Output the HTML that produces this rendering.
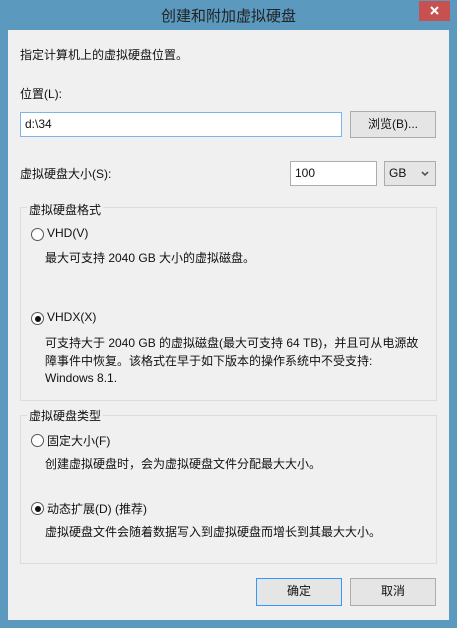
<!DOCTYPE html><html><head><meta charset="utf-8"><style>
*{margin:0;padding:0;box-sizing:border-box}
body{width:457px;height:628px;background:#5b99bf;position:relative;overflow:hidden;font-family:"Liberation Sans","Noto Sans CJK SC",sans-serif;font-size:12px;color:#111}
.a{position:absolute;white-space:nowrap}
#c{position:absolute;left:8px;top:30px;width:441px;height:590px;background:#f0f0f0}
.title{position:absolute;left:0;width:457px;top:5px;text-align:center;font-size:15px;color:#222}
.close{position:absolute;left:419px;top:1px;width:31px;height:20px;background:#c75050}
.inp{position:absolute;background:#fff;border:1px solid #abadb3;padding-left:4px;line-height:22px;font-size:12px}
.btn{position:absolute;background:#e5e5e5;border:1px solid #acacac;text-align:center;line-height:25px}
.grp{position:absolute;border:1px solid #dcdcdc}
.leg{position:absolute;background:#f0f0f0;padding:0 2px}
.r{position:absolute;width:13px;height:13px;border:1px solid #555;border-radius:50%;background:#fff}
.r.on::after{content:"";position:absolute;left:2.5px;top:2.5px;width:6px;height:6px;border-radius:50%;background:#111}
</style></head><body>
<div class="title">创建和附加虚拟硬盘</div>
<div class="close"><svg width="31" height="20"><path d="M12 6l7 7M19 6l-7 7" stroke="#fff" stroke-width="2"/></svg></div>
<div id="c"></div>
<div class="a" style="left:20px;top:46px">指定计算机上的虚拟硬盘位置。</div>
<div class="a" style="left:20px;top:85px">位置(L):</div>
<div class="inp" style="left:20px;top:112px;width:322px;height:25px;border-color:#7eb4ea">d:\34</div>
<div class="btn" style="left:350px;top:111px;width:86px;height:27px">浏览(B)...</div>
<div class="a" style="left:20px;top:165px">虚拟硬盘大小(S):</div>
<div class="inp" style="left:290px;top:161px;width:87px;height:25px">100</div>
<div class="inp" style="left:384px;top:161px;width:52px;height:25px;background:#e5e5e5;border-color:#acacac">GB<svg style="position:absolute;right:6px;top:9px" width="8" height="6"><path d="M1 1l3 3 3-3" stroke="#444" stroke-width="1.5" fill="none"/></svg></div>
<div class="grp" style="left:20px;top:207px;width:417px;height:194px"></div>
<div class="a leg" style="left:27px;top:201px">虚拟硬盘格式</div>
<div class="r" style="left:31px;top:228px"></div>
<div class="a" style="left:47px;top:226px">VHD(V)</div>
<div class="a" style="left:45px;top:249px">最大可支持 2040 GB 大小的虚拟磁盘。</div>
<div class="r on" style="left:31px;top:312px"></div>
<div class="a" style="left:47px;top:310px">VHDX(X)</div>
<div class="a" style="left:45px;top:335px;line-height:17.5px">可支持大于 2040 GB 的虚拟磁盘(最大可支持 64 TB)，并且可从电源故<br>障事件中恢复。该格式在早于如下版本的操作系统中不受支持:<br>Windows 8.1.</div>
<div class="grp" style="left:20px;top:415px;width:417px;height:149px"></div>
<div class="a leg" style="left:27px;top:407px">虚拟硬盘类型</div>
<div class="r" style="left:31px;top:434px"></div>
<div class="a" style="left:47px;top:432px">固定大小(F)</div>
<div class="a" style="left:45px;top:455px">创建虚拟硬盘时，会为虚拟硬盘文件分配最大大小。</div>
<div class="r on" style="left:31px;top:502px"></div>
<div class="a" style="left:47px;top:500px">动态扩展(D) (推荐)</div>
<div class="a" style="left:45px;top:523px">虚拟硬盘文件会随着数据写入到虚拟硬盘而增长到其最大大小。</div>
<div class="btn" style="left:256px;top:578px;width:86px;height:28px;border-color:#3399ff">确定</div>
<div class="btn" style="left:350px;top:578px;width:86px;height:28px">取消</div>
</body></html>
